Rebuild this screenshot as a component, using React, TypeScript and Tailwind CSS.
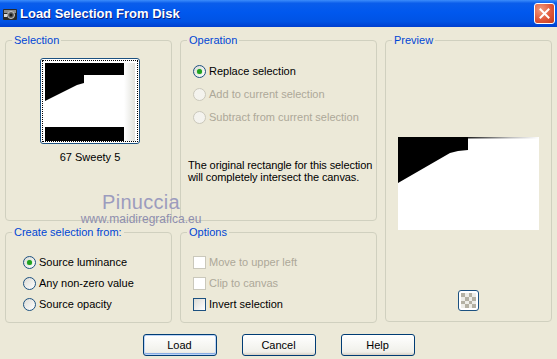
import React from "react";

function Radio({ checked, disabled, label }: { checked?: boolean; disabled?: boolean; label: string }) {
  return (
    <div className="flex h-[16px] items-center">
      <span
        className={
          "flex h-[13px] w-[13px] items-center justify-center rounded-full border " +
          (disabled
            ? "border-[#CAC8BB] bg-[#F4F3EE]"
            : "border-[#1C5180] bg-[linear-gradient(135deg,#DCDBD5,#FFFFFF)]")
        }
      >
        {checked && <span className="h-[5px] w-[5px] rounded-full bg-[#21A121] shadow-[0_0_1px_#5FD15F]" />}
      </span>
      <span className={"ml-[3px] whitespace-nowrap " + (disabled ? "text-[#ACA899]" : "text-black")}>{label}</span>
    </div>
  );
}

function Check({ disabled, label }: { disabled?: boolean; label: string }) {
  return (
    <div className="flex h-[16px] items-center">
      <span
        className={
          "h-[13px] w-[13px] border " +
          (disabled
            ? "border-[#CAC8BB] bg-white"
            : "border-[#1C5180] bg-[linear-gradient(135deg,#DCDBD5,#FFFFFF)]")
        }
      />
      <span className={"ml-[3px] whitespace-nowrap " + (disabled ? "text-[#ACA899]" : "text-black")}>{label}</span>
    </div>
  );
}

function Group({ title, className, children }: { title: string; className: string; children?: React.ReactNode }) {
  return (
    <fieldset className={"rounded-[4px] border border-[#D0D0BF] " + className}>
      <legend className="ml-[6px] px-[2px] leading-[13px] text-[#0046D5]">{title}</legend>
      {children}
    </fieldset>
  );
}

function XpButton({ label, isDefault }: { label: string; isDefault?: boolean }) {
  return (
    <button
      className={
        "h-[22px] w-[74px] rounded-[3px] border border-[#003C74] bg-[linear-gradient(to_bottom,#FFFFFF,#F0F0EA_85%,#D6D0C5)] text-[11px] text-black " +
        (isDefault ? "shadow-[inset_0_0_0_1px_#BCD4F6,inset_0_-1px_0_1px_#89ADE4]" : "")
      }
    >
      {label}
    </button>
  );
}

export default function App() {
  return (
    <div className="relative h-[359px] w-[557px] overflow-hidden bg-[#ECE9D8] font-['Liberation_Sans',Arial,sans-serif] text-[11px]">
      {/* title bar */}
      <div className="flex h-[27px] items-center bg-[linear-gradient(to_bottom,#3C8DFB_0%,#0A5DEB_12%,#0058EE_45%,#0053E4_80%,#003FCF_100%)] pl-[2px] pr-[2px]">
        <svg width="16" height="16" viewBox="0 0 16 16">
          <rect x="1" y="3" width="14" height="11" rx="1" fill="#2A2A2A" />
          <rect x="2" y="4" width="12" height="3" fill="#8C8C8C" />
          <circle cx="9" cy="9" r="3.5" fill="#5A5A5A" stroke="#C8C8C8" strokeWidth="1" />
          <circle cx="9" cy="9" r="1.5" fill="#1A1A1A" />
          <rect x="2" y="8" width="3" height="3" fill="#DADADA" />
        </svg>
        <span className="ml-[2px] text-[13px] font-bold text-white [text-shadow:1px_1px_0_#0A1E80]">
          Load Selection From Disk
        </span>
        <div className="ml-auto flex h-[21px] w-[21px] items-center justify-center rounded-[3px] border border-white bg-[radial-gradient(circle_at_30%_30%,#F09A7E,#E0583A_55%,#C03A1E)]">
          <svg width="11" height="11" viewBox="0 0 11 11">
            <path d="M1.5 1.5 L9.5 9.5 M9.5 1.5 L1.5 9.5" stroke="white" strokeWidth="2" strokeLinecap="square" />
          </svg>
        </div>
      </div>

      {/* body */}
      <div className="px-[5px] pt-[7px]">
        <div className="flex gap-[8px]">
          {/* left column */}
          <div className="flex w-[167px] flex-col gap-[5px]">
            <Group title="Selection" className="h-[187px]">
              <div className="flex flex-col items-center pl-[3px]">
                <div className="mt-[11px] h-[86px] w-[100px] rounded-[3px] border border-[#1C5180] bg-white p-[1px]">
                  <div className="h-full w-full border border-dotted border-black p-[2px]">
                    <svg width="90" height="78" viewBox="0 0 90 78" className="block">
                      <defs>
                        <linearGradient id="strip" x1="0" x2="1" y1="0" y2="0">
                          <stop offset="0" stopColor="#FFFFFF" />
                          <stop offset="1" stopColor="#E2E2DC" />
                        </linearGradient>
                      </defs>
                      <rect x="0" y="0" width="90" height="78" fill="white" />
                      <polygon points="0,0 79,0 79,12 39,12 39,20 32,22 0,38" fill="black" />
                      <rect x="0" y="64" width="79" height="14" fill="black" />
                      <rect x="79" y="0" width="11" height="78" fill="url(#strip)" />
                    </svg>
                  </div>
                </div>
                <div className="mt-[5px] text-black">67 Sweety 5</div>
              </div>
            </Group>
            <Group title="Create selection from:" className="h-[97px]">
              <div className="mt-[15px] flex flex-col gap-[5px] pl-[17px]">
                <Radio checked label="Source luminance" />
                <Radio label="Any non-zero value" />
                <Radio label="Source opacity" />
              </div>
            </Group>
          </div>

          {/* middle column */}
          <div className="flex w-[197px] flex-col gap-[5px]">
            <Group title="Operation" className="h-[187px]">
              <div className="mt-[16px] flex flex-col gap-[7px] pl-[12px]">
                <Radio checked label="Replace selection" />
                <Radio disabled label="Add to current selection" />
                <Radio disabled label="Subtract from current selection" />
              </div>
              <p className="mt-[34px] whitespace-nowrap pl-[7px] leading-[12px] tracking-[-0.1px] text-black">
                The original rectangle for this selection
                <br />
                will completely intersect the canvas.
              </p>
            </Group>
            <Group title="Options" className="h-[97px]">
              <div className="mt-[15px] flex flex-col gap-[5px] pl-[12px]">
                <Check disabled label="Move to upper left" />
                <Check disabled label="Clip to canvas" />
                <Check label="Invert selection" />
              </div>
            </Group>
          </div>

          {/* preview */}
          <Group title="Preview" className="h-[288px] w-[167px]">
            <div className="flex flex-col items-center">
              <svg width="141" height="93" viewBox="0 0 141 93" className="mt-[90px] block">
                <defs>
                  <linearGradient id="topline" x1="0" x2="1" y1="0" y2="0">
                    <stop offset="0" stopColor="#222" />
                    <stop offset="0.6" stopColor="#BBB" />
                    <stop offset="1" stopColor="#FFF" />
                  </linearGradient>
                </defs>
                <rect x="0" y="0" width="141" height="93" fill="white" />
                <rect x="70" y="0" width="71" height="1.5" fill="url(#topline)" />
                <polygon points="0,0 70,0 70,13 60,14 52,16 0,46" fill="black" />
              </svg>
              <div className="mt-[60px] grid h-[21px] w-[21px] grid-cols-4 grid-rows-4 overflow-hidden rounded-[3px] border border-[#1C5180] bg-white p-[2px]">
                {Array.from({ length: 16 }).map((_, i) => (
                  <span
                    key={i}
                    className={(Math.floor(i / 4) + (i % 4)) % 2 === 0 ? "bg-[#B4B1A4]" : "bg-[#EDEDE8]"}
                  />
                ))}
              </div>
            </div>
          </Group>
        </div>

        {/* buttons */}
        <div className="mt-[11px] flex justify-center gap-[25px]">
          <XpButton label="Load" isDefault />
          <XpButton label="Cancel" />
          <XpButton label="Help" />
        </div>
      </div>

      {/* watermark */}
      <div className="pointer-events-none absolute left-[80px] top-[191px] flex w-[122px] flex-col items-center font-['Liberation_Sans',sans-serif] text-[#9C9CBE]">
        <span className="text-[20px] leading-[22px] tracking-[0.3px]">Pinuccia</span>
        <span className="text-[12px] leading-[13px] text-[#8E8EAE]">www.maidiregrafica.eu</span>
      </div>
    </div>
  );
}
